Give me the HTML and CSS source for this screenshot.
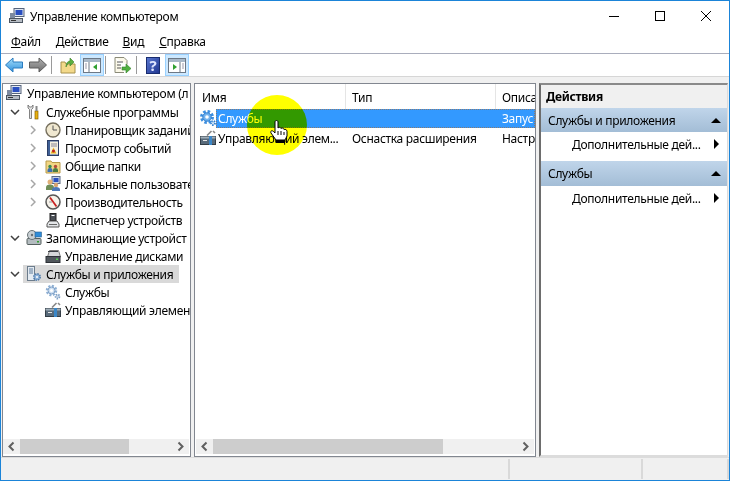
FILE: index.html
```html
<!DOCTYPE html>
<html lang="ru">
<head>
  <meta charset="UTF-8" />
  <title>Управление компьютером</title>
  <link rel="stylesheet" href="styles.css">
</head>
<body>
<svg class="defs" width="0" height="0">
  <defs>
    <linearGradient id="g-back" x1="0" y1="0" x2="0" y2="1"><stop offset="0" stop-color="#a8e0fb"/><stop offset="1" stop-color="#2f8fdc"/></linearGradient>
    <linearGradient id="g-fwd" x1="0" y1="0" x2="0" y2="1"><stop offset="0" stop-color="#b0b0b0"/><stop offset="1" stop-color="#6e6e6e"/></linearGradient>
    <linearGradient id="g-help" x1="0" y1="0" x2="1" y2="1"><stop offset="0" stop-color="#5a78d0"/><stop offset="1" stop-color="#1f3590"/></linearGradient>
    <symbol id="i-comp" viewBox="0 0 16 16">
      <rect x="5" y="0.500" width="10" height="8" fill="#dfe6f0" stroke="#56647c"/>
      <rect x="6.500" y="2" width="7" height="5" fill="#2a4fc0"/>
      <rect x="1" y="5" width="5" height="5" fill="#7d8aa0"/>
      <rect x="0.500" y="10.500" width="13" height="4" fill="#b6bcc4" stroke="#4c5662"/>
      <rect x="2" y="12" width="5" height="1" fill="#333"/>
    </symbol>
    <symbol id="i-tools" viewBox="0 0 16 16">
      <path d="M2 1v3l1.500 1.500v9h2v-9L7 4V1L5.500 3h-2z" fill="#e4e4e4" stroke="#666" stroke-width=".8"/>
      <rect x="9" y="7" width="3" height="8" fill="#e8b010" stroke="#8a6400" stroke-width=".7"/>
      <rect x="9.500" y="2" width="2" height="5" fill="#888"/>
    </symbol>
    <symbol id="i-clock" viewBox="0 0 16 16">
      <circle cx="8" cy="8" r="7" fill="#f0e8d0" stroke="#77705e" stroke-width="1.400"/>
      <path d="M8 3.500V8h4" fill="none" stroke="#555" stroke-width="1"/>
    </symbol>
    <symbol id="i-log" viewBox="0 0 16 16">
      <rect x="2.500" y="0.500" width="11" height="15" fill="#3f5f95" stroke="#2c3e66"/>
      <rect x="5" y="1.500" width="8" height="13" fill="#f4f0df"/>
      <path d="M6 4h6M6 6h6" stroke="#889" stroke-width="1"/>
      <path d="M8.500 7.500l3 6h-6z" fill="#e8b820"/>
      <circle cx="8.500" cy="11" r="1.500" fill="#c02020"/>
    </symbol>
    <symbol id="i-share" viewBox="0 0 16 16">
      <path d="M1 15V3h5l1 1.500h8V15z" fill="#f2d684" stroke="#b89a48"/>
      <circle cx="5" cy="8.500" r="1.700" fill="#3a8a50"/>
      <path d="M2.500 14v-2a2.500 2 0 0 1 5 0v2z" fill="#3d6fb0"/>
      <circle cx="10.500" cy="8.500" r="1.700" fill="#b04a3a"/>
      <path d="M8 14v-2a2.500 2 0 0 1 5 0v2z" fill="#4a7d40"/>
    </symbol>
    <symbol id="i-users" viewBox="0 0 16 16">
      <rect x="7" y="0.500" width="8" height="7" fill="#c8d4e4" stroke="#5a6a84"/>
      <rect x="8.500" y="2" width="5" height="4" fill="#2a4fc0"/>
      <circle cx="5" cy="6" r="2.500" fill="#e2b078"/>
      <path d="M1 14v-2.500a4 3 0 0 1 8 0V14z" fill="#6f8d58"/>
      <circle cx="11" cy="9" r="2.200" fill="#d8a470"/>
      <path d="M7 15v-1.500a4 2.500 0 0 1 8 0V15z" fill="#4c78b8"/>
    </symbol>
    <symbol id="i-perf" viewBox="0 0 16 16">
      <circle cx="8" cy="8" r="7" fill="#f6f2ea" stroke="#555" stroke-width="1.500"/>
      <path d="M5 3.500l6.500 9" stroke="#c82020" stroke-width="1.800"/>
      <path d="M4 8h3" stroke="#999" stroke-width="1"/>
    </symbol>
    <symbol id="i-dev" viewBox="0 0 16 16">
      <rect x="5" y="1.500" width="6" height="7" fill="#4a4f56" stroke="#222"/>
      <rect x="6.500" y="3" width="3" height="1" fill="#fff"/>
      <path d="M2 15v-3l2-3h8l2 3v3z" fill="#e4e6e8" stroke="#555"/>
      <rect x="4" y="12" width="8" height="1" fill="#666"/>
    </symbol>
    <symbol id="i-store" viewBox="0 0 16 16">
      <rect x="1" y="8.500" width="14" height="6" rx="1" fill="#b4bcc0" stroke="#56605f"/>
      <circle cx="6" cy="5" r="4.500" fill="#c9d0d4" stroke="#6a7478"/>
      <circle cx="6" cy="5" r="1.200" fill="#687076"/>
      <rect x="9" y="2" width="6.500" height="5" fill="#2f8cd8" stroke="#2a5f90" stroke-width=".6"/>
      <rect x="11" y="11" width="2" height="1.500" fill="#30a030"/>
    </symbol>
    <symbol id="i-disk" viewBox="0 0 16 16">
      <path d="M2.500 9l2-6.500h9l2 6.500z" fill="#d4d6d8" stroke="#777"/>
      <rect x="1" y="8.500" width="14" height="6" fill="#50565c" stroke="#2c3036"/>
      <rect x="11" y="10.500" width="2" height="1.500" fill="#50d050"/>
      <rect x="3" y="3" width="10" height="1" fill="#3a3e44"/>
    </symbol>
    <symbol id="i-apps" viewBox="0 0 16 16">
      <rect x="1.500" y="0.500" width="7" height="14" fill="#e4ebf2" stroke="#6c7c8c"/>
      <path d="M3 3h4M3 5h4M3 7h4" stroke="#5f7d9c" stroke-width="1"/>
      <circle cx="11" cy="11" r="3.200" fill="#8fb2d8" stroke="#4d78a8" stroke-width="1.500" stroke-dasharray="1.500 1"/>
      <circle cx="11" cy="11" r="1" fill="#fff"/>
    </symbol>
    <symbol id="i-gear" viewBox="0 0 16 16">
      <circle cx="6.500" cy="6.500" r="4.500" fill="none" stroke="#8fb0d4" stroke-width="2.500" stroke-dasharray="2 1.500"/>
      <circle cx="6.500" cy="6.500" r="3.500" fill="#cfe0f2" stroke="#7d9fc6"/>
      <circle cx="6.500" cy="6.500" r="1.500" fill="#fff"/>
      <circle cx="12.500" cy="12.500" r="2" fill="#cfdceb" stroke="#7d9fc6" stroke-width="1.800" stroke-dasharray="1.300 1"/>
    </symbol>
    <symbol id="i-gear-sel" viewBox="0 0 16 16">
      <circle cx="7" cy="7" r="5.500" fill="none" stroke="#3d8fe0" stroke-width="3" stroke-dasharray="2.500 1.800"/>
      <circle cx="7" cy="7" r="4.200" fill="#72b2ee" stroke="#2f7fd0"/>
      <circle cx="7" cy="7" r="1.800" fill="#fff"/>
      <circle cx="13" cy="13" r="2" fill="#cfe2f5" stroke="#2f7fd0" stroke-width="1.800" stroke-dasharray="1.300 1"/>
    </symbol>
    <symbol id="i-wmi" viewBox="0 0 16 16">
      <rect x="0.500" y="6.500" width="15" height="8" fill="#586a7a" stroke="#333d46"/>
      <rect x="0.500" y="6.500" width="15" height="2" fill="#a0aeb8"/>
      <rect x="9" y="6" width="3" height="9" fill="#3b87c8"/>
      <path d="M7 5.500L11.500 1M13 1l2 2" stroke="#888" stroke-width="1.600" fill="none"/>
      <rect x="3" y="10" width="4" height="1" fill="#e6e6e6"/>
    </symbol>
    <symbol id="i-chev-r" viewBox="0 0 6 10">
      <path d="M1 1l4 4-4 4" fill="none" stroke="#a6a6a6" stroke-width="1.500"/>
    </symbol>
    <symbol id="i-chev-d" viewBox="0 0 10 6">
      <path d="M1 1l4 4 4-4" fill="none" stroke="#404040" stroke-width="1.500"/>
    </symbol>
  </defs>
</svg>

<div class="window">
  <header class="titlebar">
    <svg class="ico"><use href="#i-comp"/></svg>
    <span class="title">Управление компьютером</span>
    <div class="winbtns">
      <svg class="winbtn" viewBox="0 0 46 30"><path d="M18 15.500h10" stroke="#000"/></svg>
      <svg class="winbtn" viewBox="0 0 46 30"><rect x="18.500" y="10.500" width="9" height="9" fill="none" stroke="#000"/></svg>
      <svg class="winbtn" viewBox="0 0 46 30"><path d="M18 10l10 10M28 10L18 20" stroke="#000"/></svg>
    </div>
  </header>

  <nav class="menu">
    <span class="m-file"><u>Ф</u>айл</span>
    <span class="m-act"><u>Д</u>ействие</span>
    <span class="m-view"><u>В</u>ид</span>
    <span class="m-help"><u>С</u>правка</span>
  </nav>

  <div class="toolbar">
    <svg class="tool" viewBox="0 0 22 22"><path d="M2.500 11l7.500-7v4h9.500v6H10v4z" fill="url(#g-back)" stroke="#2b7cc0"/></svg>
    <svg class="tool t-next" viewBox="0 0 22 22"><path d="M20.500 11L13 4v4H3.500v6H13v4z" fill="url(#g-fwd)" stroke="#5c5c5c"/></svg>
    <i class="sep s-a"></i>
    <svg class="tool" viewBox="0 0 22 22"><path d="M4 19V8h4l1 2h9v9z" fill="#f3d98a" stroke="#a8924c"/><path d="M9 13c0-4 2-6 4-6V4l4 4-4 4V9c-2 0-3 2-4 4z" fill="#5cb040" stroke="#3a8028" stroke-width=".6"/></svg>
    <span class="tool-on"><svg class="tool" viewBox="0 0 22 22"><rect x="2.500" y="4.500" width="17" height="14" fill="#fff" stroke="#6c7886"/><rect x="3" y="5" width="16" height="3" fill="#a8b8c8"/><path d="M8 8v10" stroke="#6c7886"/><path d="M16 10v6l-4-3z" fill="#30a030"/><path d="M4 10h2M4 12h2M4 14h2" stroke="#99a"/></svg></span>
    <i class="sep s-b"></i>
    <svg class="tool" viewBox="0 0 22 22"><path d="M4 3.500h9l3 3v4M4 3.500v15h9" fill="#fbf8e8" stroke="#8a8a78"/><path d="M6 8h6M6 11h4M6 14h4" stroke="#555"/><path d="M11 13h4v-3l5 4.500-5 4.500v-3h-4z" fill="#50b040" stroke="#348028" stroke-width=".6"/></svg>
    <i class="sep s-a"></i>
    <svg class="tool" viewBox="0 0 22 22"><rect x="4.500" y="3.500" width="13" height="16" fill="url(#g-help)" stroke="#182c70"/><text x="11" y="16.500" class="qmark">?</text></svg>
    <span class="tool-on"><svg class="tool" viewBox="0 0 22 22"><rect x="2.500" y="4.500" width="17" height="14" fill="#fff" stroke="#6c7886"/><rect x="3" y="5" width="16" height="3" fill="#a8b8c8"/><path d="M14 8v10" stroke="#6c7886"/><path d="M7 10v6l4-3z" fill="#30a030"/><path d="M16 10h2M16 12h2M16 14h2" stroke="#99a"/></svg></span>
  </div>

  <main class="panes">
    <section class="pane tree">
      <div class="tree-rows">
        <div class="node root"><svg class="ico"><use href="#i-comp"/></svg><span>Управление компьютером (л</span></div>
        <div class="node l1"><svg class="chev-d"><use href="#i-chev-d"/></svg><svg class="ico"><use href="#i-tools"/></svg><span>Служебные программы</span></div>
        <div class="node l2"><svg class="chev-r"><use href="#i-chev-r"/></svg><svg class="ico"><use href="#i-clock"/></svg><span>Планировщик заданий</span></div>
        <div class="node l2"><svg class="chev-r"><use href="#i-chev-r"/></svg><svg class="ico"><use href="#i-log"/></svg><span>Просмотр событий</span></div>
        <div class="node l2"><svg class="chev-r"><use href="#i-chev-r"/></svg><svg class="ico"><use href="#i-share"/></svg><span>Общие папки</span></div>
        <div class="node l2"><svg class="chev-r"><use href="#i-chev-r"/></svg><svg class="ico"><use href="#i-users"/></svg><span>Локальные пользовате</span></div>
        <div class="node l2"><svg class="chev-r"><use href="#i-chev-r"/></svg><svg class="ico"><use href="#i-perf"/></svg><span>Производительность</span></div>
        <div class="node l3"><svg class="ico"><use href="#i-dev"/></svg><span>Диспетчер устройств</span></div>
        <div class="node l1"><svg class="chev-d"><use href="#i-chev-d"/></svg><svg class="ico"><use href="#i-store"/></svg><span>Запоминающие устройст</span></div>
        <div class="node l3"><svg class="ico"><use href="#i-disk"/></svg><span>Управление дисками</span></div>
        <div class="node l1"><svg class="chev-d"><use href="#i-chev-d"/></svg><div class="hl"><svg class="ico"><use href="#i-apps"/></svg><span>Службы и приложения</span></div></div>
        <div class="node l3"><svg class="ico"><use href="#i-gear"/></svg><span>Службы</span></div>
        <div class="node l3"><svg class="ico"><use href="#i-wmi"/></svg><span>Управляющий элемен</span></div>
      </div>
      <div class="hscroll">
        <svg class="arr" viewBox="0 0 17 15"><path d="M10.500 3.500l-4 4 4 4" fill="none" stroke="#606060" stroke-width="2"/></svg>
        <div class="track"><div class="thumb thumb-tree"></div></div>
        <svg class="arr" viewBox="0 0 17 15"><path d="M6.500 3.500l4 4-4 4" fill="none" stroke="#606060" stroke-width="2"/></svg>
      </div>
    </section>

    <section class="pane list">
      <div class="list-head">
        <div class="col col-name">Имя</div>
        <div class="col col-type">Тип</div>
        <div class="col col-desc">Описа</div>
      </div>
      <div class="list-rows">
        <div class="list-row">
          <svg class="ico"><use href="#i-gear-sel"/></svg>
          <div class="sel"><span class="cell cell-name">Службы</span><span class="cell cell-type"></span><span class="cell">Запус</span></div>
        </div>
        <div class="list-row">
          <svg class="ico"><use href="#i-wmi"/></svg>
          <div class="plain"><span class="cell cell-name">Управляющий элем...</span><span class="cell cell-type">Оснастка расширения</span><span class="cell">Настр</span></div>
        </div>
      </div>
      <div class="hscroll hscroll-list">
        <svg class="arr" viewBox="0 0 17 15"><path d="M10.500 3.500l-4 4 4 4" fill="none" stroke="#606060" stroke-width="2"/></svg>
        <div class="track"><div class="thumb thumb-list"></div></div>
        <svg class="arr" viewBox="0 0 17 15"><path d="M6.500 3.500l4 4-4 4" fill="none" stroke="#606060" stroke-width="2"/></svg>
      </div>
    </section>

    <aside class="pane actions">
      <div class="act-head">Действия</div>
      <div class="act-group">Службы и приложения<i class="tri-up"></i></div>
      <div class="act-item">Дополнительные дей...<i class="tri-right"></i></div>
      <div class="act-group act-second">Службы<i class="tri-up"></i></div>
      <div class="act-item">Дополнительные дей...<i class="tri-right"></i></div>
    </aside>
  </main>

  <footer class="status">
    <div class="st st-a"></div>
    <div class="st st-b"></div>
    <div class="st st-c"></div>
  </footer>
</div>

<div class="spot"></div>
<svg class="hand" viewBox="0 0 18 22">
  <path d="M5 2c0-2 3-2 3 0v6c1-1 2.500-1 3 .5 1-1 2.500-.5 3 1 1-.5 3 0 3 2V16l-2 4H6l-5-7c-1-2 1-3 2.500-1.500L5 13z" fill="#fff" stroke="#000"/>
  <path d="M8 11v4M11 11v4M14 12v3" stroke="#000"/>
  <rect x="5.500" y="20" width="10" height="2" fill="#000"/>
</svg>
</body>
</html>
```

FILE: styles.css
```css
* { box-sizing: border-box; }
html, body { margin: 0; height: 100%; }
body { font-family: "Noto Sans", sans-serif; font-size: 12px; letter-spacing: -0.3px; color: #000; overflow: hidden; position: relative; }
.defs { position: absolute; }

.window { width: 730px; height: 481px; border: 1px solid #1b84d8; display: flex; flex-direction: column; background: #f0f0f0; }

.titlebar { height: 30px; background: #fff; display: flex; align-items: center; padding-left: 8px; flex: none; }
.title { margin-left: 5px; }
.winbtns { margin-left: auto; display: flex; }
.winbtn { width: 46px; height: 30px; display: block; }

.menu { height: 23px; background: #fff; display: flex; flex: none; padding: 0 0 1px 10px; align-items: center; border-bottom: 1px solid #a9adbc; }
.m-act { margin-left: 15px; }
.m-view { margin-left: 14px; }
.m-help { margin-left: 15px; }

.toolbar { height: 23px; background: #fff; display: flex; align-items: center; flex: none; padding-left: 2px; border-bottom: 1px solid #d6d6d6; }
.tool { width: 22px; height: 22px; display: block; flex: none; }
.t-next { margin-left: 1px; }
.tool-on { background: #cce8ff; border: 1px solid #99d1ff; display: block; height: 22px; width: 24px; margin-left: 1px; }
.tool-on .tool { margin: -1px 0 0 0; }
.sep { width: 1px; height: 18px; background: #9a9a9a; flex: none; }
.s-a { margin: 0 5px 0 3px; }
.s-b { margin: 0 5px 0 1px; }
.qmark { font-size: 15px; font-weight: 700; fill: #dfe6ff; text-anchor: middle; }

.panes { flex: 1; display: flex; padding: 6px 1px 0 1px; gap: 3px; min-height: 0; }
.pane { background: #fff; border: 1px solid #828790; display: flex; flex-direction: column; min-height: 0; position: relative; }

.ico { width: 16px; height: 16px; flex: none; display: block; }

.tree { width: 189px; }
.tree-rows { flex: 1; overflow: hidden; padding-left: 3px; }
.node { height: 18px; display: flex; align-items: center; white-space: nowrap; }
.node > span, .hl > span { margin-left: 4px; }
.root { margin-bottom: 1px; }
.root > span { margin-left: 5px; }
.l1 { padding-left: 4px; }
.l2 { padding-left: 24px; }
.l3 { padding-left: 39px; }
.chev-r { width: 6px; height: 10px; margin-right: 9px; flex: none; }
.chev-d { width: 10px; height: 6px; margin-right: 6px; flex: none; }
.hl { background: #d9d9d9; height: 18px; display: flex; align-items: center; width: 156px; margin-left: -3px; padding-left: 3px; }

.hscroll { height: 15px; display: flex; background: #f0f0f0; margin: 0 1px 2px 0; flex: none; }
.hscroll-list { margin-left: 1px; }
.arr { width: 17px; height: 15px; display: block; flex: none; }
.track { flex: 1; }
.thumb { height: 15px; background: #cdcdcd; }
.thumb-tree { width: 109px; }
.thumb-list { width: 230px; }

.list { width: 342px; }
.list-head { display: flex; height: 25px; flex: none; }
.col { padding: 5px 0 0 6px; border-right: 1px solid #e5e5e5; }
.col-name { width: 151px; padding-left: 7px; }
.col-type { width: 150px; }
.col-desc { flex: 1; border-right: 0; overflow: hidden; }
.list-rows { flex: 1; overflow: hidden; }
.list-row { display: flex; height: 20px; align-items: flex-start; padding-left: 5px; }
.list-row .ico { margin-top: 1px; }
.sel, .plain { display: flex; flex: 1; height: 19px; align-items: center; overflow: hidden; white-space: nowrap; }
.sel { background: #3399ff; color: #fff; outline: 1px dotted rgba(170, 110, 60, 0.7); outline-offset: -1px; }
.cell { padding-left: 2px; }
.cell-name { width: 134px; flex: none; }
.cell-type { width: 150px; flex: none; }

.actions { flex: 1; border-width: 2px 1px 2px 2px; border-style: solid; border-color: #8a8a8a #dcdcdc #dcdcdc #6d6d6d; }
.act-head { height: 23px; background: #f0f0f0; font-weight: 700; padding: 3px 0 0 5px; flex: none; }
.act-group { height: 24px; background: linear-gradient(#c0d5ea, #a3bdd6); display: flex; align-items: center; padding: 0 6px 0 7px; justify-content: space-between; flex: none; }
.act-second { margin-top: 5px; height: 25px; }
.act-item { height: 24px; display: flex; align-items: center; justify-content: space-between; padding: 0 8px 0 31px; flex: none; }
.tri-up { width: 0; height: 0; border: 5px solid transparent; border-bottom: 5px solid #000; border-top: 0; }
.tri-right { width: 0; height: 0; border: 5px solid transparent; border-left: 5px solid #000; border-right: 0; }

.status { height: 23px; display: flex; flex: none; padding: 1px 0 1px 0; border-top: 1px solid #dcdcdc; }
.st { border-right: 2px solid #d9d9d9; }
.st-a { width: 509px; }
.st-b { width: 133px; }
.st-c { width: 86px; }

.spot { position: absolute; left: 247px; top: 95px; width: 60px; height: 60px; border-radius: 50%; background: #ffff00; mix-blend-mode: multiply; }
.hand { position: absolute; left: 270px; top: 120px; width: 18px; height: 22px; }
```
